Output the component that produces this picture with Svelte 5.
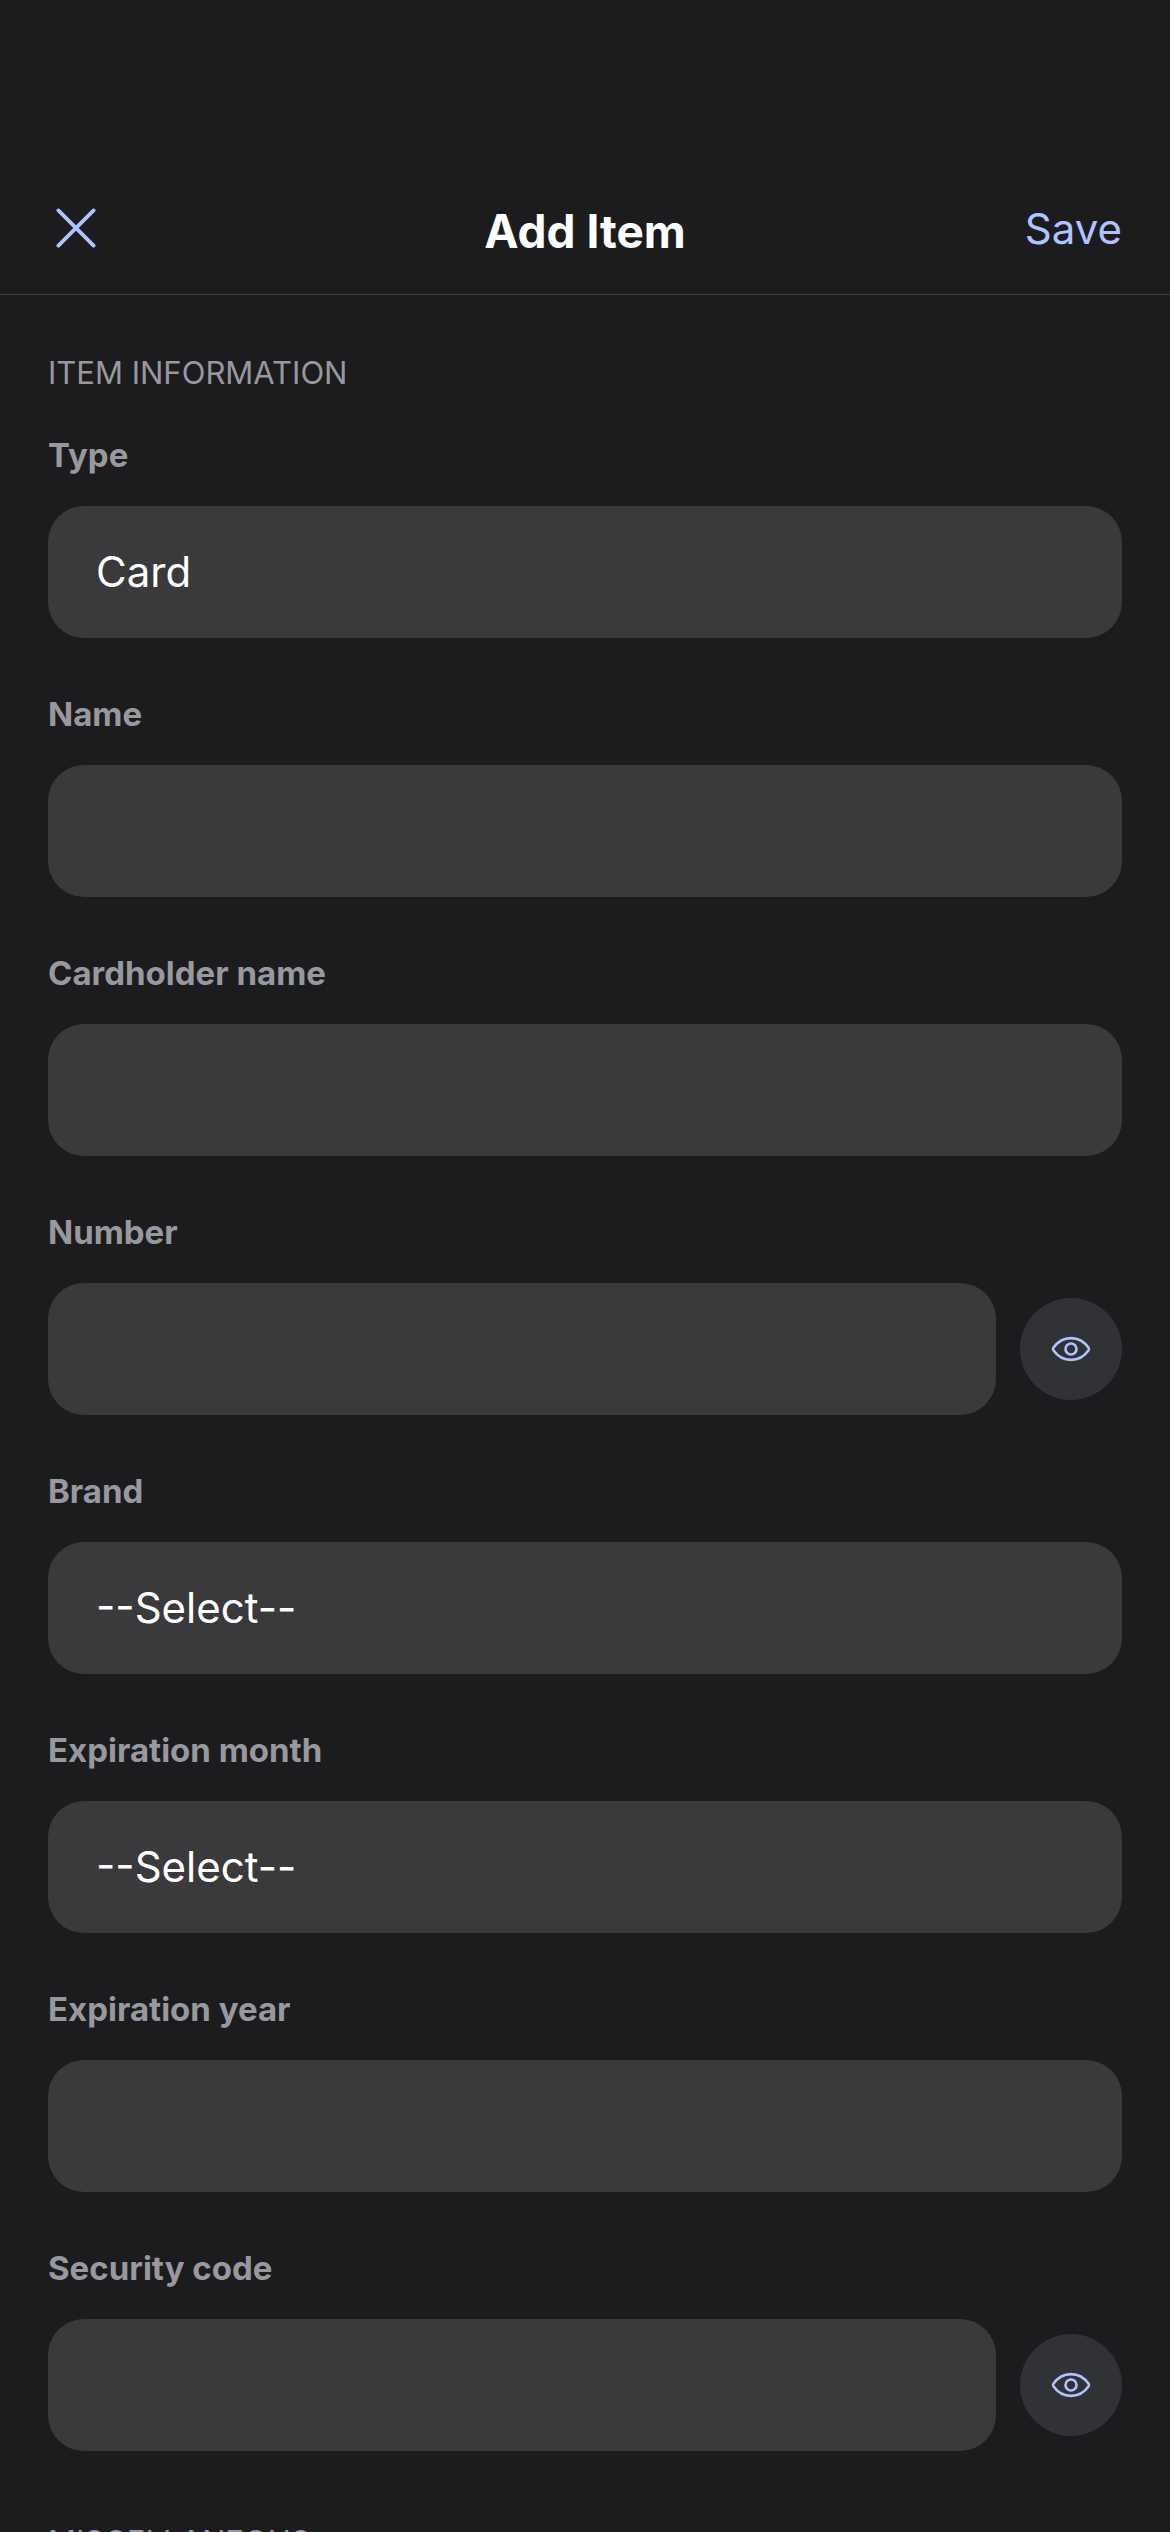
<script>
  let type = $state('Card');
  let brand = $state('');
  let month = $state('');
  let revealed = $state({ number: false, code: false });

  const types = ['Login', 'Card', 'Identity', 'Secure note'];
  const brands = ['Visa', 'Mastercard', 'American Express', 'Discover'];
  const months = ['01', '02', '03', '04', '05', '06', '07', '08', '09', '10', '11', '12'];
</script>

{#snippet eye()}
  <svg class="eye" viewBox="0 0 40 26" fill="none" stroke="currentColor" stroke-width="2.6" stroke-linejoin="round" aria-hidden="true">
    <path d="M2.4 11.8C6.2 6.4 12.2 2.1 20 2.1s13.8 4.3 17.6 9.7q.8 1.2 0 2.4C33.8 19.6 27.8 23.9 20 23.9S6.2 19.6 2.4 14.2q-.8-1.2 0-2.4Z" />
    <circle cx="20" cy="13" r="5.5" />
  </svg>
{/snippet}

<form class="screen" onsubmit={(e) => e.preventDefault()}>
  <header>
    <button class="close" type="button" aria-label="Close">
      <svg viewBox="0 0 40 40" fill="none" stroke="currentColor" stroke-width="3.8" stroke-linecap="round" aria-hidden="true">
        <path d="M2.4 2.4 37.6 37.6M37.6 2.4 2.4 37.6" />
      </svg>
    </button>
    <h1>Add Item</h1>
    <button class="save" type="submit">Save</button>
  </header>

  <main>
    <h2>ITEM INFORMATION</h2>

    <div class="fields">
      <div class="field">
        <label for="type">Type</label>
        <select id="type" class="control" bind:value={type}>
          {#each types as option}<option>{option}</option>{/each}
        </select>
      </div>

      <div class="field">
        <label for="name">Name</label>
        <input id="name" class="control" type="text" />
      </div>

      <div class="field">
        <label for="holder">Cardholder name</label>
        <input id="holder" class="control" type="text" />
      </div>

      <div class="field">
        <label for="number">Number</label>
        <div class="row">
          <input id="number" class="control" type={revealed.number ? 'text' : 'password'} />
          <button class="reveal" type="button" aria-label="Toggle number visibility" onclick={() => (revealed.number = !revealed.number)}>
            {@render eye()}
          </button>
        </div>
      </div>

      <div class="field">
        <label for="brand">Brand</label>
        <select id="brand" class="control" bind:value={brand}>
          <option value="">--Select--</option>
          {#each brands as option}<option>{option}</option>{/each}
        </select>
      </div>

      <div class="field">
        <label for="month">Expiration month</label>
        <select id="month" class="control" bind:value={month}>
          <option value="">--Select--</option>
          {#each months as option}<option>{option}</option>{/each}
        </select>
      </div>

      <div class="field">
        <label for="year">Expiration year</label>
        <input id="year" class="control" type="text" />
      </div>

      <div class="field">
        <label for="code">Security code</label>
        <div class="row">
          <input id="code" class="control" type={revealed.code ? 'text' : 'password'} />
          <button class="reveal" type="button" aria-label="Toggle security code visibility" onclick={() => (revealed.code = !revealed.code)}>
            {@render eye()}
          </button>
        </div>
      </div>
    </div>

    <h2 class="next">MISCELLANEOUS</h2>
  </main>
</form>

<style>
  :global(body) {
    background: #1c1c1e;
  }

  .screen {
    height: 100vh;
    overflow: hidden;
    box-sizing: border-box;
    background: #1c1c1e;
    color: #fff;
    font-family: Inter, 'Liberation Sans', sans-serif;
    font-size: 42px;
  }

  header {
    display: grid;
    grid-template-columns: 1fr auto 1fr;
    align-items: center;
    height: 126px;
    padding: 168px 48px 0;
    border-bottom: 1px solid #414144;
  }

  button {
    display: grid;
    place-items: center;
    padding: 0;
    border: 0;
    background: none;
    color: #afc3ff;
    font: inherit;
    cursor: pointer;
  }

  .close {
    width: 56px;
    height: 56px;
    margin-bottom: 6px;
  }

  .close svg {
    width: 40px;
    height: 40px;
  }

  h1 {
    margin: 0;
    font-size: 46px;
    font-weight: 700;
  }

  .save {
    justify-self: end;
    margin-bottom: 6px;
  }

  main {
    padding: 57px 48px 0;
  }

  h2 {
    margin: 0 0 40px;
    color: #98989f;
    font-size: 31px;
    font-weight: 400;
    line-height: 42px;
  }

  .next {
    margin-top: 70px;
  }

  .fields {
    display: grid;
    gap: 55px;
  }

  .field {
    display: grid;
    gap: 30px;
  }

  label {
    color: #98989f;
    font-size: 33px;
    font-weight: 700;
    line-height: 42px;
  }

  .control {
    box-sizing: border-box;
    width: 100%;
    min-width: 0;
    height: 132px;
    padding: 0 48px 2px;
    border: 0;
    border-radius: 36px;
    appearance: none;
    background: #3a3a3c;
    color: #fff;
    font: inherit;
  }

  .row {
    display: flex;
    align-items: center;
    gap: 24px;
  }

  .reveal {
    flex: none;
    width: 102px;
    height: 102px;
    border-radius: 50%;
    background: #303236;
  }

  .eye {
    width: 40px;
    height: 26px;
  }
</style>
